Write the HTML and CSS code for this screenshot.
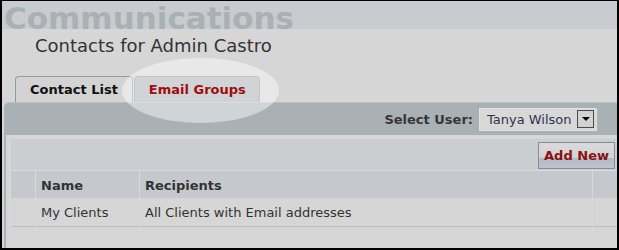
FILE: index.html
```html
<!DOCTYPE html>
<html lang="en">

<head>
    <meta charset="UTF-8">
    <meta name="viewport" content="width=device-width, initial-scale=1.0">
    <title>Communications</title>
    <link rel="stylesheet" href="styles.css">
</head>

<body>
    <div class="frame">
        <div class="banner">Communications</div>
        <div class="subtitle">Contacts for Admin Castro</div>
        <div class="tabs">
            <div class="tab"><span>Contact List</span></div>
            <div class="tab active"><span>Email Groups</span></div>
        </div>
        <div class="panel">
            <div class="panel-bar">
                <span class="select-label">Select User:</span>
                <div class="select">
                    <span>Tanya Wilson</span>
                    <span class="drop"><i></i></span>
                </div>
            </div>
            <div class="panel-body">
                <div class="toolbar">
                    <button class="add-btn">Add New</button>
                </div>
                <table class="groups">
                    <tr>
                        <th class="edge"></th>
                        <th class="col-name">Name</th>
                        <th class="col-recipients">Recipients</th>
                        <th class="edge-end"></th>
                    </tr>
                    <tr>
                        <td></td>
                        <td>My Clients</td>
                        <td>All Clients with Email addresses</td>
                        <td></td>
                    </tr>
                </table>
            </div>
        </div>
        <!-- highlight round the active tab -->
        <div class="spotlight"></div>
    </div>
</body>
</html>
```

FILE: styles.css
```css
* {
    margin: 0;
    padding: 0;
    box-sizing: border-box;
}

body {
    width: 619px;
    height: 250px;
    font-family: 'DejaVu Sans', Verdana, sans-serif;
    font-size: 13px;
    color: #333;
}

.frame {
    position: relative;
    width: 619px;
    height: 250px;
    border: 2px solid #000;
    border-top-width: 1px;
    background: #d6d6d6;
    overflow: hidden;
    display: flex;
    flex-direction: column;
}

.banner {
    flex: none;
    height: 28px;
    line-height: 28px;
    padding: 3px 0 0 2px;
    background: #c8cbcf;
    color: #aab1b5;
    font-size: 31px;
    font-weight: bold;
    white-space: nowrap;
}

.subtitle {
    margin-top: 6px;
    padding-left: 33px;
    font-size: 18px;
    line-height: 22px;
    color: #333;
}

.tabs {
    display: flex;
    gap: 1px;
    margin-top: 19px;
    margin-left: 13px;
}

.tab {
    height: 26px;
    padding: 0 14px;
    line-height: 25px;
    border: 1px solid #8f9ca3;
    border-bottom: 0;
    border-radius: 4px 4px 0 0;
    background: #d3d3d3;
    color: #111;
    font-weight: bold;
}

.tab span {
    position: relative;
    z-index: 2;
}

.tab.active {
    padding: 0 13px 0 14px;
    background: #a9b1b4;
    color: #a30d0d;
}

.panel {
    flex: 1;
    margin-left: 2px;
    display: flex;
    flex-direction: column;
}

.panel-bar {
    height: 33px;
    border-top: 1px solid #bcc3c6;
    border-radius: 5px 0 0 0;
    background: #a9b1b4;
    display: flex;
    justify-content: flex-end;
    align-items: center;
    gap: 6px;
    padding-right: 20px;
}

.select-label {
    font-weight: bold;
    color: #363636;
}

.select {
    width: 118px;
    height: 23px;
    border: 1px solid #dfe1e2;
    background: #d8d8d8;
    display: flex;
    align-items: center;
    justify-content: space-between;
    padding: 0 2px 0 7px;
    color: #33334a;
}

.drop {
    width: 17px;
    height: 18px;
    border: 1px solid #4a4a4a;
    background: #d2d2d2;
    display: flex;
    align-items: center;
    justify-content: center;
}

.drop i {
    border-left: 4px solid transparent;
    border-right: 4px solid transparent;
    border-top: 4px solid #000;
}

.panel-body {
    flex: 1;
    border-left: 2px solid #aab2b5;
    padding: 4px 0 0 5px;
}

.toolbar {
    background: #caced1;
    padding: 3px 2px 1px 0;
    display: flex;
    justify-content: flex-end;
}

.add-btn {
    width: 77px;
    height: 27px;
    border: 1px solid #878d96;
    background: linear-gradient(#dadada 0%, #d3d3d3 58%, #b3b8c6 62%, #bfc3cd 100%);
    color: #8b1010;
    font-family: 'DejaVu Sans', Verdana, sans-serif;
    font-size: 13px;
    font-weight: bold;
}

.groups {
    width: 614px;
    table-layout: fixed;
    border-top: 1px solid #d9dbdd;
    border-collapse: separate;
    border-spacing: 1px 0;
    margin-left: -1px;
    background: #d8d9db;
}

.groups th {
    height: 27px;
    padding: 2px 5px 0;
    background: #c5c9ce;
    text-align: left;
    font-weight: bold;
    color: #333;
}

.groups td {
    height: 29px;
    padding: 0 5px;
    background: #d6d6d6;
    border-bottom: 1px solid #b9bdc0;
    white-space: nowrap;
}

.groups .edge {
    width: 24px;
}

.groups .col-name {
    width: 103px;
}

.groups .col-recipients {
    width: 452px;
}

.groups .edge-end {
    width: 30px;
}

.spotlight {
    position: absolute;
    z-index: 1;
    left: 120px;
    top: 57px;
    width: 157px;
    height: 65px;
    border-radius: 50%;
    background: rgba(255, 255, 255, 0.45);
}
```
